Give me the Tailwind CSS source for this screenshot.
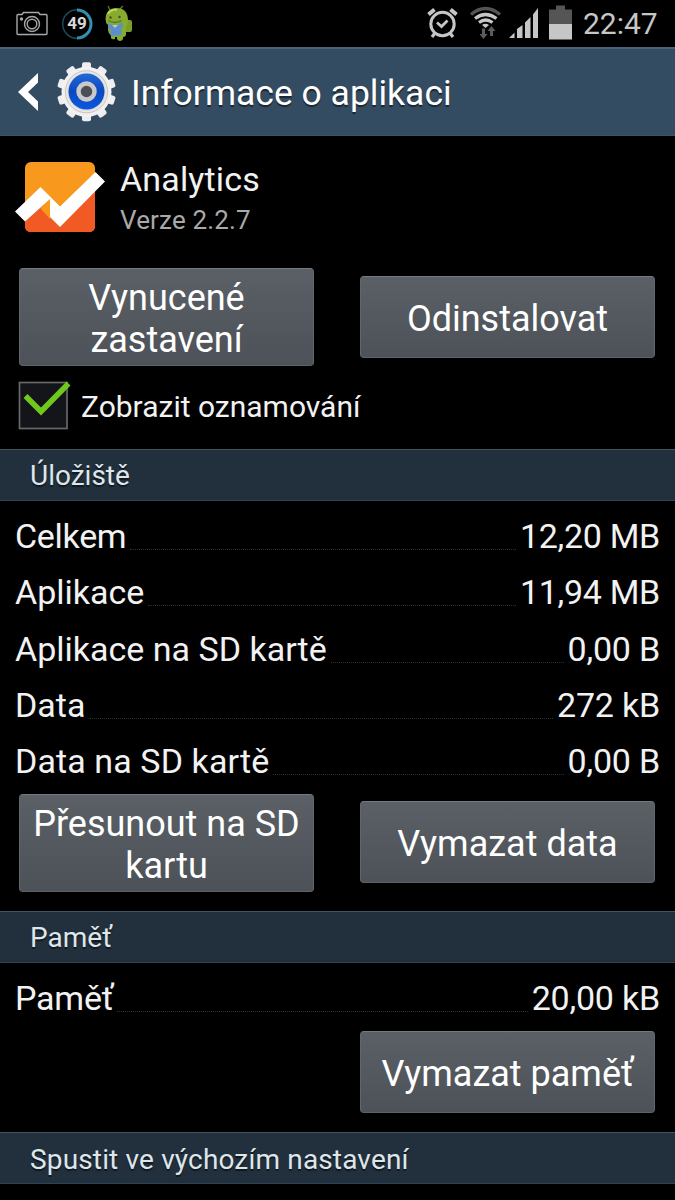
<!DOCTYPE html>
<html lang="cs">
  <head>
    <meta charset="UTF-8" />
    <meta name="viewport" content="width=device-width, initial-scale=1.0" />
    <title>Informace o aplikaci</title>
    <script src="https://cdn.jsdelivr.net/npm/@tailwindcss/browser@4"></script>
  </head>
  <body class="bg-black">
    <div class="w-[675px] h-[1200px] overflow-hidden bg-black text-[#f2f2f2] font-['Roboto',sans-serif]">
      <!-- status bar -->
      <div class="h-[47px] flex items-center justify-between pl-4 pr-[17px]">
        <div class="flex items-center">
          <svg class="w-8 h-[47px]" viewBox="16 0 32 47" fill="none" stroke="#a8a8a8" stroke-width="1.4">
            <path d="M18 14.5h4l1.500-2h15l1.500 2h6q1 0 1 1v18q0 1-1 1H18q-1 0-1-1v-18q0-1 1-1z" />
            <circle cx="32" cy="24" r="7.5" />
            <circle cx="32" cy="24" r="4.8" />
            <circle cx="21.5" cy="19" r="1" fill="#a8a8a8" />
          </svg>
          <div class="relative w-8 h-8 ml-[13px] flex items-center justify-center text-[17px] font-bold text-[#d8d8d8]">
            <svg class="absolute inset-0 w-8 h-8" viewBox="0 0 32 32" fill="none">
              <circle cx="16" cy="16" r="14.3" stroke="#1d4858" stroke-width="1.5" />
              <path d="M16 2a14 14 0 1 1 0 28" stroke="#338fb0" stroke-width="3" />
            </svg>
            <span>49</span>
          </div>
          <svg class="w-7 h-[47px] ml-3" viewBox="105 0 28 47">
            <path d="M110 10l-2-4M120 9l3-3" stroke="#5f7d22" stroke-width="1.300" />
            <rect x="124" y="20" width="8" height="12" rx="2" fill="#7b9d2b" />
            <path d="M105.500 20q0-12 11-12t11.500 12q0 5-2 7v7q0 3-3 3v2q-1 2-3 2t-3-2v-2h-2v2q-3 1-4-1v-3q-3-2-3-5v-5q-2.500-2-2.500-6z" fill="#86ab2f" />
            <path d="M108 14q3-5 9-4" fill="none" stroke="#b6d75c" stroke-width="2" />
            <circle cx="110.500" cy="17.500" r="1.200" fill="#41531e" />
            <circle cx="119.500" cy="17" r="1.200" fill="#41531e" />
            <path d="M108.500 20.500q6.500 4 13 0" fill="none" stroke="#587326" stroke-width="1.300" />
            <path d="M108 23l4 2h6l4-3 1 4-2 3 1 5q-3 3-6 1-3 2-6 0l1-5-3-2z" fill="#5c8fc9" />
            <path d="M112 25h6l-3 3z" fill="#b4c9da" />
          </svg>
        </div>
        <div class="flex items-center">
          <svg class="w-[146px] h-[47px]" viewBox="427 0 146 47" fill="none" stroke="#c6c6c6">
            <!-- alarm -->
            <circle cx="442.5" cy="24" r="11.7" stroke-width="3" />
            <path d="M437 22.5l4.5 4 6-6" stroke-width="2.8" />
            <path d="M428.5 14.5l6-5M456.5 14.5l-6-5" stroke-width="4" />
            <path d="M435 33l-3 4M450 33l3 4" stroke-width="3.2" />
            <!-- wifi with transfer arrows -->
            <path d="M471 14.5q14.5-12 29 0" stroke="#555" stroke-width="3.4" />
            <path d="M475 18.500q10.500-8 21.500 0M479 22.500q6.700-5 13.500 0" stroke-width="3.2" />
            <path d="M482 25q3.500-2.500 7 0l-3.500 3z" fill="#c6c6c6" stroke="none" />
            <path d="M482 28.500h3V34h2.500l-4 5-4-5h2.500zM490 36v-5h-2.500l4-5 4 5H493v5z" fill="#5c5c5c" stroke="none" />
            <!-- signal -->
            <path d="M509 38l5.500-5.500V38zM517 38v-9l5.500-4V38zM525 38V22.500l5.500-5.500V38zM533 38V14.500l5-6.500V38z" fill="#c6c6c6" stroke="none" />
            <!-- battery -->
            <path d="M549 24V9.500h7v-4h9v4h7V24z" fill="#555" stroke="none" />
            <path d="M549 24h23v15.500h-23z" fill="#c6c6c6" stroke="none" />
          </svg>
          <span class="ml-[10px] w-[75px] text-[30px] leading-[47px] whitespace-nowrap text-[#c6c6c6]">22:47</span>
        </div>
      </div>

      <!-- action bar -->
      <div class="h-[89px] flex items-center bg-[#344c62] border-t-2 border-t-[#4a6178] border-b border-b-[#3d5266] pl-4 text-shadow-[0_2px_1px_#00000080]">
        <svg class="w-[102px] h-[86px] shrink-0" viewBox="16 49 102 86">
          <defs>
            <radialGradient id="metal" cx=".5" cy=".5" r=".5">
              <stop offset=".6" stop-color="#b9bcc2" />
              <stop offset=".8" stop-color="#eceaea" />
              <stop offset="1" stop-color="#f4f4f6" />
            </radialGradient>
            <linearGradient id="blue" x1="0" y1="0" x2="0" y2="1">
              <stop offset="0" stop-color="#2269d8" />
              <stop offset=".5" stop-color="#0b48c0" />
              <stop offset="1" stop-color="#0a59e0" />
            </linearGradient>
          </defs>
          <path d="M38 73v9.500l-10 9.500 10 9.500v9.500L18 92z" fill="#fff" />
          <g fill="#eeeef0">
            <rect x="82" y="62.300" width="9" height="59" rx="2" />
            <rect x="82" y="62.300" width="9" height="59" rx="2" transform="rotate(36 86.500 91.800)" />
            <rect x="82" y="62.300" width="9" height="59" rx="2" transform="rotate(72 86.500 91.800)" />
            <rect x="82" y="62.300" width="9" height="59" rx="2" transform="rotate(108 86.500 91.800)" />
            <rect x="82" y="62.300" width="9" height="59" rx="2" transform="rotate(144 86.500 91.800)" />
          </g>
          <circle cx="86.500" cy="91.800" r="25" fill="url(#metal)" />
          <circle cx="86.500" cy="91.800" r="21" fill="none" stroke="#c9b7ac" stroke-width=".8" />
          <circle cx="86.500" cy="91.500" r="18" fill="url(#blue)" />
          <circle cx="86.500" cy="91.500" r="8" fill="#4b5058" stroke="#c9c9cb" stroke-width="4.500" />
        </svg>
        <h1 class="ml-[13px] pt-0.5 text-[35.500px] leading-10 whitespace-nowrap text-white"><span>Informace o aplikaci</span></h1>
      </div>

      <!-- app summary -->
      <div class="h-[313px]">
        <div class="h-[132px] flex pl-[15px] pt-[22px]">
          <svg class="w-[91px] h-[78px] shrink-0" viewBox="15 158 91 78">
            <rect x="25" y="162" width="70" height="70" rx="6" fill="#f8981d" />
            <path d="M25 211l18-10 17 24 35-37v38q0 6-6 6H31q-6 0-6-6z" fill="#f15a24" />
            <path d="M50 198l-9.500 10.500L50 219z" fill="#f8981d" />
            <path d="M15 211.500L40.500 187l19.500 19.500L95.500 172l9.500 9.500L60 227l-10-10v-18L25 221.500z" fill="#fff" />
          </svg>
          <div class="ml-[14px]">
            <div class="text-[34px] leading-[40px] mt-px tracking-[0.15px] whitespace-nowrap"><span>Analytics</span></div>
            <div class="text-[26px] leading-[32px] mt-[5px] tracking-[0.15px] whitespace-nowrap text-[#a9a9a9]"><span>Verze 2.2.7</span></div>
          </div>
        </div>
        <div class="h-[98px] flex items-center justify-between pl-[19px] pr-5 text-[36px] leading-[42px] text-center text-white">
          <button class="w-[295px] h-[98px] pt-1 rounded-[4px] border border-t-[#747b80] border-x-[#61686d] border-b-[#5c6368] bg-linear-to-b from-[#5a6065] to-[#4c5257]">Vynucené<br />zastavení</button>
          <button class="w-[295px] h-[82px] pt-[3px] rounded-[4px] border border-t-[#747b80] border-x-[#61686d] border-b-[#5c6368] bg-linear-to-b from-[#5a6065] to-[#4c5257]">Odinstalovat</button>
        </div>
        <div class="h-[83px] flex items-start pt-3 pl-[18px]">
          <svg class="w-[54px] h-[54px]" viewBox="18 378 54 54">
            <rect x="19.500" y="382.500" width="47.500" height="46" fill="#14151a" stroke="#66686a" stroke-width="1.700" />
            <path d="M25.500 396L41 411.500 68.500 383.500" fill="none" stroke="#70c81c" stroke-width="5.500" />
          </svg>
          <span class="mt-[11px] ml-[9px] text-[30px] leading-9 whitespace-nowrap">Zobrazit oznamování</span>
        </div>
      </div>

      <!-- storage -->
      <h2 class="h-[52px] border-t border-t-[#43535f] border-b border-b-[#2f424f] bg-[#22303d] pl-[30px] text-[28px] leading-[52px] text-[#dfe6ea] text-shadow-[0_2px_1px_#00000080]">Úložiště</h2>
      <div class="h-[293px] pt-[7px] px-[15px] text-[34px] leading-[56.250px]">
        <div class="flex h-[56.250px]">
          <span class="tracking-[-0.300px]">Celkem</span>
          <i class="grow mx-1 mt-[41px] h-0 border-t border-dotted border-[#303030]"></i>
          <span class="tracking-[-0.300px]">12,20 MB</span>
        </div>
        <div class="flex h-[56.250px]">
          <span>Aplikace</span>
          <i class="grow mx-1 mt-[41px] h-0 border-t border-dotted border-[#303030]"></i>
          <span class="tracking-[-0.300px]">11,94 MB</span>
        </div>
        <div class="flex h-[56.250px]">
          <span>Aplikace na SD kartě</span>
          <i class="grow mx-1 mt-[41px] h-0 border-t border-dotted border-[#303030]"></i>
          <span class="tracking-[-0.200px]">0,00 B</span>
        </div>
        <div class="flex h-[56.250px]">
          <span>Data</span>
          <i class="grow mx-1 mt-[41px] h-0 border-t border-dotted border-[#303030]"></i>
          <span class="tracking-[-0.200px]">272 kB</span>
        </div>
        <div class="flex h-[56.250px]">
          <span class="tracking-[0.100px]">Data na SD kartě</span>
          <i class="grow mx-1 mt-[41px] h-0 border-t border-dotted border-[#303030]"></i>
          <span class="tracking-[-0.200px]">0,00 B</span>
        </div>
      </div>
      <div class="h-[117px] flex items-start justify-between pl-[19px] pr-5 text-[36px] leading-[42px] text-center text-white">
        <button class="w-[295px] h-[98px] pt-1 rounded-[4px] border border-t-[#747b80] border-x-[#61686d] border-b-[#5c6368] bg-linear-to-b from-[#5a6065] to-[#4c5257]">Přesunout na SD<br />kartu</button>
        <button class="w-[295px] h-[82px] pt-1 mt-[7px] rounded-[4px] border border-t-[#747b80] border-x-[#61686d] border-b-[#5c6368] bg-linear-to-b from-[#5a6065] to-[#4c5257]">Vymazat data</button>
      </div>

      <!-- cache -->
      <h2 class="h-[52px] border-t border-t-[#43535f] border-b border-b-[#2f424f] bg-[#22303d] pl-[30px] text-[28px] leading-[52px] text-[#dfe6ea] text-shadow-[0_2px_1px_#00000080]">Paměť</h2>
      <div class="h-[68px] pt-[7px] px-[15px] text-[34px] leading-[56.250px]">
        <div class="flex h-[56.250px]">
          <span class="tracking-[-0.200px]">Paměť</span>
          <i class="grow mx-1 mt-[41px] h-0 border-t border-dotted border-[#303030]"></i>
          <span class="tracking-[-0.200px]">20,00 kB</span>
        </div>
      </div>
      <div class="h-[101px] flex justify-end pr-5 text-[36px] leading-[42px] text-center text-white">
        <button class="w-[295px] h-[82px] pt-1 rounded-[4px] border border-t-[#747b80] border-x-[#61686d] border-b-[#5c6368] bg-linear-to-b from-[#5a6065] to-[#4c5257]">Vymazat paměť</button>
      </div>

      <!-- launch by default -->
      <h2 class="h-[52px] border-t border-t-[#43535f] border-b border-b-[#2f424f] bg-[#22303d] pl-[30px] text-[28px] leading-[53px] tracking-[0.150px] text-[#dfe6ea] text-shadow-[0_2px_1px_#00000080]">Spustit ve výchozím nastavení</h2>
    </div>
  </body>
</html>
